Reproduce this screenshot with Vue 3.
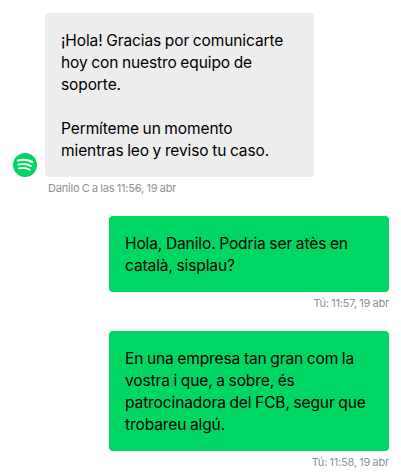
<template>
  <div class="chat">
    <div v-for="msg in messages" :key="msg.id" class="message" :class="{ own: msg.own }">
      <div class="row">
        <svg v-if="!msg.own" class="avatar" viewBox="0 0 24 24">
          <circle cx="12" cy="12" r="12" fill="#00d663" />
          <g fill="none" stroke="#fff" stroke-linecap="round">
            <path d="M5 7.500c4.900-1.300 10.100-.8 14.300 1.500" stroke-width="2.200" />
            <path d="M5.500 11.600c4.300-1.100 8.900-.6 12.600 1.500" stroke-width="1.900" />
            <path d="M6 15.400c3.700-.9 7.600-.5 10.800 1.400" stroke-width="1.600" />
          </g>
        </svg>
        <p class="bubble">{{ msg.text }}</p>
      </div>
      <div class="meta">{{ msg.meta }}</div>
    </div>
  </div>
</template>

<script setup>
const messages = [
  {
    id: 1,
    own: false,
    text: "¡Hola! Gracias por comunicarte\nhoy con nuestro equipo de\nsoporte.\n\nPermíteme un momento\nmientras leo y reviso tu caso.",
    meta: "Danilo C a las 11:56, 19 abr",
  },
  {
    id: 2,
    own: true,
    text: "Hola, Danilo. Podria ser atès en\ncatalà, sisplau?",
    meta: "Tú: 11:57, 19 abr",
  },
  {
    id: 3,
    own: true,
    text: "En una empresa tan gran com la\nvostra i que, a sobre, és\npatrocinadora del FCB, segur que\ntrobareu algú.",
    meta: "Tú: 11:58, 19 abr",
  },
];
</script>

<style>
body{margin:0;background:#fff}
</style>

<style scoped>
.chat{box-sizing:border-box;width:401px;height:476px;padding:13px 12px 0 13px;overflow:hidden;font-family:Inter,"Liberation Sans",sans-serif}
.message{margin-bottom:17px}
.row{display:flex;align-items:flex-end;gap:8px}
.own .row{justify-content:flex-end}
.avatar{width:24px;height:24px;flex:none}
.bubble{box-sizing:border-box;width:269px;margin:0;padding:17px 16px 15px;border-radius:4px;background:#ededed;color:#000;font-size:15.5px;line-height:22px;letter-spacing:-.1px;word-spacing:-.6px;white-space:pre}
.own .bubble{width:280px;background:#00d663}
.meta{height:22px;padding-left:35px;color:#919191;font-size:11px;line-height:22px;letter-spacing:-.2px;word-spacing:-.5px}
.own .meta{padding-left:0;text-align:right}
</style>
